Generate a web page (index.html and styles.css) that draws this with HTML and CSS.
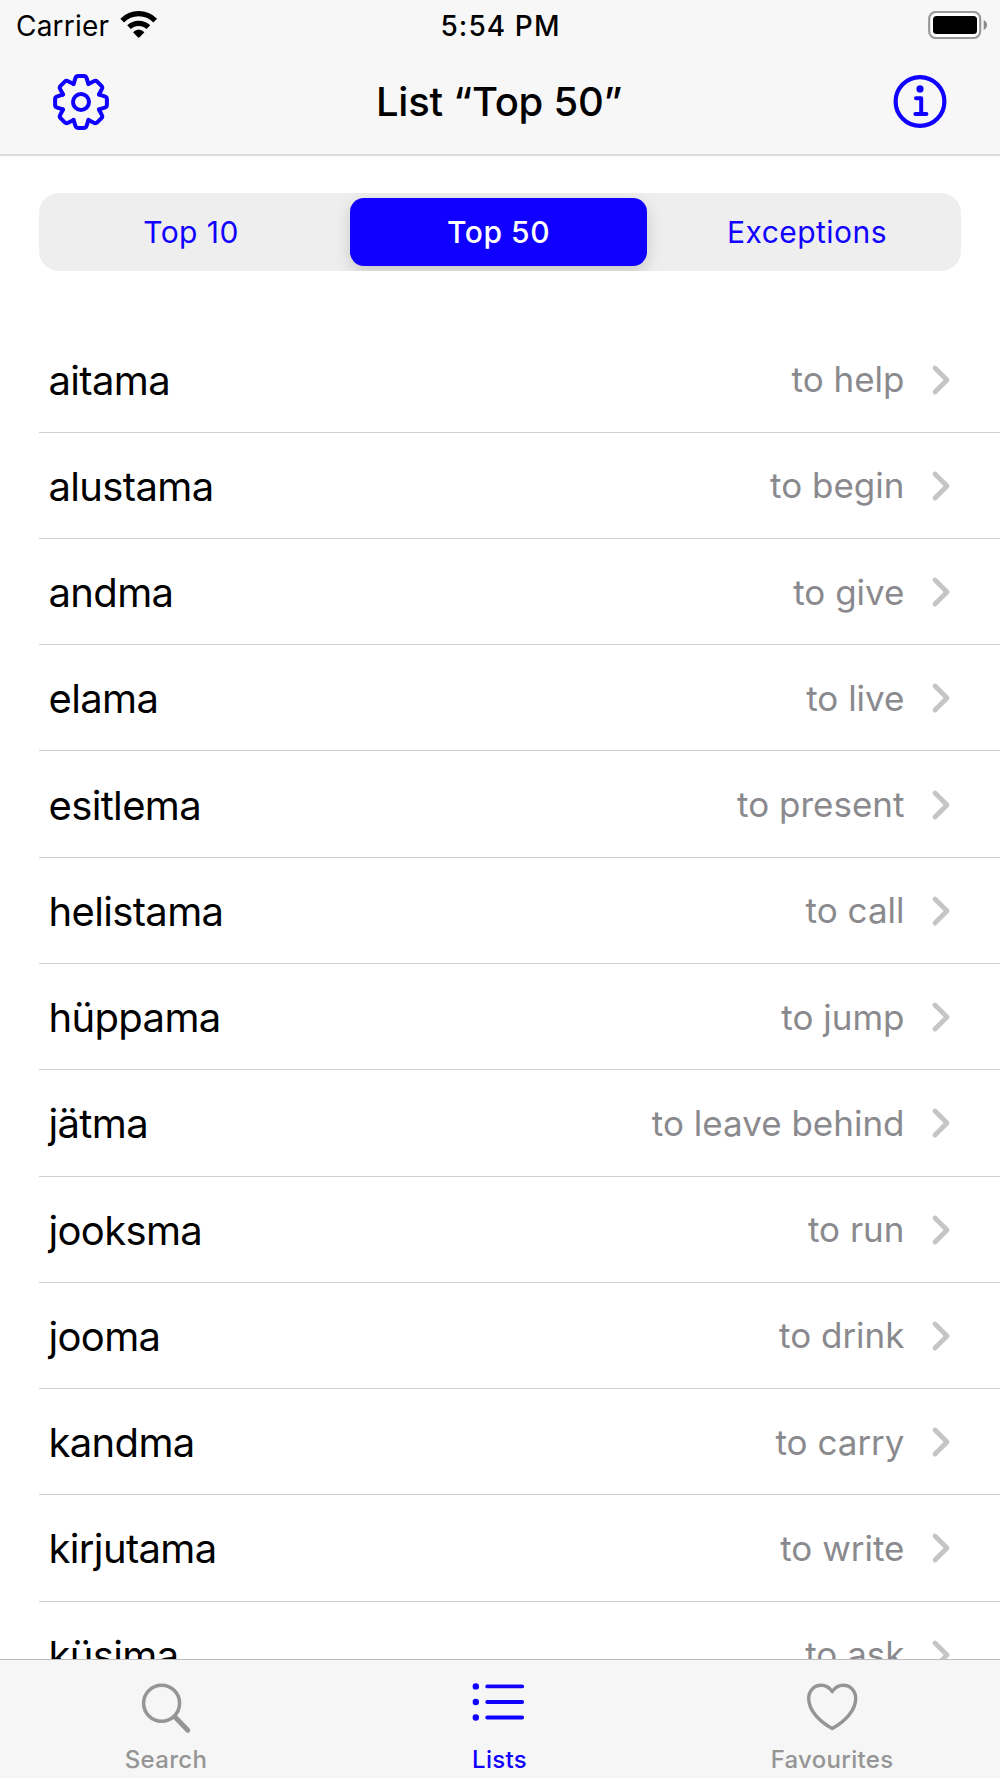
FILE: index.html
```
<!DOCTYPE html>
<html lang="en">
<head>
<meta charset="utf-8">
<title>List “Top 50”</title>
<link rel="stylesheet" href="styles.css">
</head>
<body>
<header class="header">
  <div class="status">
    <div class="carrier">
      <span>Carrier</span>
      <svg class="wifi" width="40" height="30" viewBox="0 0 40 30">
        <g fill="none" stroke="#000" stroke-width="5.2">
          <path d="M3.2 11.6A23.2 23.2 0 0 1 36.2 11.6"/>
          <path d="M10 18.2A14 14 0 0 1 29.4 18.2"/>
        </g>
        <path d="M14 23.2Q19.7 18 25.4 23.2L20.6 28.2Q19.7 29 18.8 28.2Z"/>
      </svg>
    </div>
    <time class="clock">5:54 PM</time>
    <svg class="battery" width="60" height="28" viewBox="0 0 60 28">
      <rect x="1.2" y="1" width="51" height="26" rx="6.5" fill="#fff" stroke="#999" stroke-width="2.2"/>
      <rect x="5" y="5" width="44" height="18" rx="3.5"/>
      <path d="M55.7 9Q59 11 59 14T55.7 19Z" fill="#888"/>
    </svg>
  </div>
  <nav class="navbar">
    <svg class="nav-icon" width="60" height="60" viewBox="-30 -30 60 60" fill="none" stroke="#1000ff" stroke-width="4" stroke-linecap="round" stroke-linejoin="round">
      <defs><path id="tooth" d="M-7.4 -18L-5.6 -23.8Q-5 -25.9 -3 -25.9L3 -25.9Q5 -25.9 5.6 -23.8L7.4 -18"/></defs>
      <use href="#tooth"/>
      <use href="#tooth" transform="rotate(45)"/>
      <use href="#tooth" transform="rotate(90)"/>
      <use href="#tooth" transform="rotate(135)"/>
      <use href="#tooth" transform="rotate(180)"/>
      <use href="#tooth" transform="rotate(225)"/>
      <use href="#tooth" transform="rotate(270)"/>
      <use href="#tooth" transform="rotate(315)"/>
      <circle r="8"/>
    </svg>
    <h1 class="title">List “Top 50”</h1>
    <svg class="nav-icon" width="60" height="60" viewBox="-30 -29.5 60 60" fill="none" stroke="#1000ff" stroke-linecap="round" stroke-linejoin="round">
      <circle r="24.4" stroke-width="4.2"/>
      <circle cy="-12.6" r="3.6" fill="#1000ff" stroke="none"/>
      <path d="M-4 -3.2H1.2V12.4M-4.6 12.6H6.4" stroke-width="4"/>
    </svg>
  </nav>
</header>

<main class="content">
  <div class="segments">
    <button class="segment first">Top 10</button>
    <button class="segment selected">Top 50</button>
    <button class="segment">Exceptions</button>
  </div>
  <ul class="verbs">
    <li class="verb"><span class="word">aitama</span><span class="gloss">to help</span><svg class="chevron" viewBox="0 0 20 32"><path d="M4 4L16 16L4 28"/></svg></li>
    <li class="verb"><span class="word">alustama</span><span class="gloss">to begin</span><svg class="chevron" viewBox="0 0 20 32"><path d="M4 4L16 16L4 28"/></svg></li>
    <li class="verb"><span class="word">andma</span><span class="gloss">to give</span><svg class="chevron" viewBox="0 0 20 32"><path d="M4 4L16 16L4 28"/></svg></li>
    <li class="verb"><span class="word">elama</span><span class="gloss">to live</span><svg class="chevron" viewBox="0 0 20 32"><path d="M4 4L16 16L4 28"/></svg></li>
    <li class="verb"><span class="word">esitlema</span><span class="gloss">to present</span><svg class="chevron" viewBox="0 0 20 32"><path d="M4 4L16 16L4 28"/></svg></li>
    <li class="verb"><span class="word">helistama</span><span class="gloss">to call</span><svg class="chevron" viewBox="0 0 20 32"><path d="M4 4L16 16L4 28"/></svg></li>
    <li class="verb"><span class="word">hüppama</span><span class="gloss">to jump</span><svg class="chevron" viewBox="0 0 20 32"><path d="M4 4L16 16L4 28"/></svg></li>
    <li class="verb"><span class="word">jätma</span><span class="gloss">to leave behind</span><svg class="chevron" viewBox="0 0 20 32"><path d="M4 4L16 16L4 28"/></svg></li>
    <li class="verb"><span class="word">jooksma</span><span class="gloss">to run</span><svg class="chevron" viewBox="0 0 20 32"><path d="M4 4L16 16L4 28"/></svg></li>
    <li class="verb"><span class="word">jooma</span><span class="gloss">to drink</span><svg class="chevron" viewBox="0 0 20 32"><path d="M4 4L16 16L4 28"/></svg></li>
    <li class="verb"><span class="word">kandma</span><span class="gloss">to carry</span><svg class="chevron" viewBox="0 0 20 32"><path d="M4 4L16 16L4 28"/></svg></li>
    <li class="verb"><span class="word">kirjutama</span><span class="gloss">to write</span><svg class="chevron" viewBox="0 0 20 32"><path d="M4 4L16 16L4 28"/></svg></li>
    <li class="verb"><span class="word">küsima</span><span class="gloss">to ask</span><svg class="chevron" viewBox="0 0 20 32"><path d="M4 4L16 16L4 28"/></svg></li>
  </ul>
</main>

<nav class="tabbar">
  <a class="tab">
    <svg width="60" height="60" viewBox="0 0 60 60" fill="none" stroke="currentColor" stroke-linecap="round">
      <circle cx="25.6" cy="26.3" r="18" stroke-width="3.5"/>
      <path d="M39 40L51.8 53.2" stroke-width="5"/>
    </svg>
    <span>Search</span>
  </a>
  <a class="tab active">
    <svg width="60" height="60" viewBox="0 0 60 60" fill="currentColor" stroke="currentColor" stroke-linecap="round">
      <g stroke="none"><circle cx="5.8" cy="9.4" r="3.2"/><circle cx="5.8" cy="25" r="3.2"/><circle cx="5.8" cy="40.5" r="3.2"/></g>
      <path d="M17.2 9.4H52.2M17.2 25H52.2M17.2 40.5H52.2" stroke-width="3.8"/>
    </svg>
    <span>Lists</span>
  </a>
  <a class="tab">
    <svg width="60" height="60" viewBox="0 0 60 60" fill="none" stroke="currentColor" stroke-width="3.4" stroke-linejoin="round">
      <path d="M30.2 14.6C27.5 10.5 23.7 8.3 19.2 8.3C11.8 8.3 6.7 14 6.7 21.5C6.7 33.5 17.5 44.5 30.2 51.6C42.9 44.5 53.7 33.5 53.7 21.5C53.7 14 48.6 8.3 41.2 8.3C36.7 8.3 32.9 10.5 30.2 14.6Z"/>
    </svg>
    <span>Favourites</span>
  </a>
</nav>
</body>
</html>
```
FILE: styles.css
```
* { box-sizing: border-box; margin: 0; padding: 0; }

body {
  width: 1000px;
  height: 1778px;
  display: flex;
  flex-direction: column;
  overflow: hidden;
  background: #fff;
  color: #000;
  font-family: Inter, "Liberation Sans", sans-serif;
}

svg { display: block; flex: none; }

.header {
  flex: none;
  height: 156px;
  background: #f7f7f7;
  border-bottom: 2px solid #dcdcdc;
}

.status {
  height: 51px;
  display: grid;
  grid-template-columns: 1fr auto 1fr;
  align-items: center;
  padding: 0 12px 0 16px;
  font-size: 28px;
}

.carrier { display: flex; align-items: center; gap: 10px; letter-spacing: 0.2px; }
.wifi { margin-bottom: 3px; }
.clock { font-weight: 500; letter-spacing: 1.1px; margin-right: 3px; }
.battery { justify-self: end; margin-bottom: 2px; }

.navbar {
  height: 102px;
  display: flex;
  align-items: center;
  justify-content: space-between;
  padding: 0 50px 0 51px;
}

.title { font-size: 40px; font-weight: 550; letter-spacing: -0.25px; line-height: 48px; padding-right: 3px; }

.content { flex: 1; min-height: 0; overflow: hidden; }

.segments {
  display: grid;
  grid-template-columns: 307px 307px 308px;
  height: 77.5px;
  margin: 37px 39px 0;
  border-radius: 20px;
  background: #eee;
  overflow: hidden;
}

.segment {
  border: 0;
  background: none;
  color: #1000ff;
  font: 400 30px/36px Inter, "Liberation Sans", sans-serif;
  letter-spacing: 0.45px;
}

.segment.first { padding-right: 3px; }

.segment.selected {
  margin: 5px 6px 4.5px 4px;
  border-radius: 14px;
  background: #1000ff;
  color: #fff;
  font-weight: 500;
  letter-spacing: 0.55px;
  box-shadow: 0 6px 16px rgba(0, 0, 0, 0.16);
}

.verbs { list-style: none; padding: 55.9px 0 0 39px; }

.verb {
  height: 106.28px;
  display: flex;
  align-items: center;
  padding: 0 49px 0 9.5px;
  border-bottom: 1px solid #cfcfd1;
}

.word { flex: 1; padding-top: 2px; font-size: 40px; letter-spacing: -0.65px; }
.gloss { font-size: 35px; color: #8a8a8e; margin-right: 26.5px; }

.chevron {
  width: 20px;
  height: 32px;
  margin-top: 1px;
  fill: none;
  stroke: #c5c5c7;
  stroke-width: 4.8;
  stroke-linecap: round;
  stroke-linejoin: round;
}

.tabbar {
  flex: none;
  height: 119px;
  display: grid;
  grid-template-columns: 332px 336px 332px;
  padding-top: 17px;
  background: #f6f6f6;
  border-top: 1px solid #bdbdbd;
}

.tab {
  display: flex;
  flex-direction: column;
  align-items: center;
  gap: 9px;
  color: #959595;
  font-size: 24px;
  font-weight: 500;
  line-height: 28px;
  letter-spacing: 0.3px;
}

.tab:last-child { padding-right: 4px; }
.tab.active { color: #1000ff; }
.tab.active span { padding-right: 1px; }
```
